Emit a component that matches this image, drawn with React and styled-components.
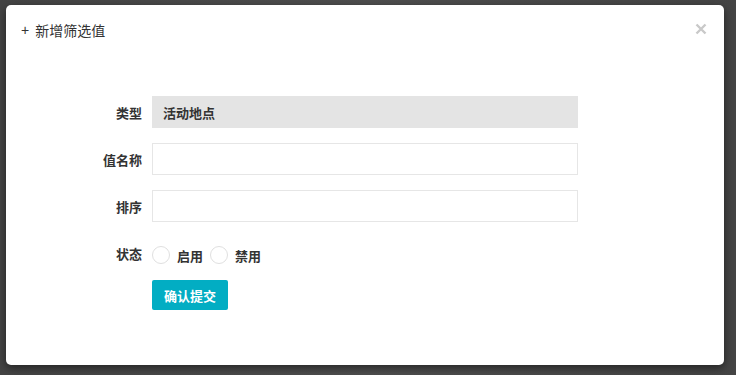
import React from "react";
import styled, { createGlobalStyle } from "styled-components";

const Global = createGlobalStyle`
  html, body { margin: 0; padding: 0; }
  body {
    width: 736px; height: 375px; overflow: hidden;
    background: #4b4b4b;
    font-family: "Noto Sans CJK SC", "Noto Sans", "Liberation Sans", sans-serif;
    color: #333;
  }
`;

const Backdrop = styled.div`
  width: 736px;
  height: 375px;
  padding: 5px 0 0 6px;
  box-sizing: border-box;
  background: linear-gradient(90deg, #444 0%, #4e4e4e 50%, #444 100%);
`;

const Modal = styled.div`
  position: relative;
  width: 718px;
  height: 360px;
  background: #fff;
  border-radius: 5px;
  box-shadow: 0 3px 9px rgba(0, 0, 0, 0.5);
  display: flex;
  flex-direction: column;
`;

const Header = styled.div`
  display: flex;
  align-items: center;
  padding: 15px 15px 0 15px;
  height: 20px;
  font-size: 14px;
  line-height: 20px;
  color: #333;
`;

const Plus = styled.span`
  margin-right: 6px;
  font-family: "Liberation Sans", sans-serif;
  font-size: 14px;
`;

const Close = styled.button`
  position: absolute;
  top: 18px;
  right: 17px;
  width: 12px;
  height: 12px;
  padding: 0;
  border: 0;
  background: transparent;
  display: flex;
`;

const Form = styled.div`
  margin-top: 56px;
  padding-left: 56px;
  display: flex;
  flex-direction: column;
  gap: 15px;
`;

const Row = styled.div`
  display: flex;
  align-items: center;
  gap: 10px;
  height: 32px;
`;

const Label = styled.div`
  width: 80px;
  text-align: right;
  font-size: 13px;
  font-weight: 700;
  color: #333;
`;

const Field = styled.div`
  width: 426px;
  height: 32px;
  box-sizing: border-box;
  display: flex;
  align-items: center;
  padding: 0 10px;
  font-size: 13px;
  font-weight: 700;
  color: #333;
  background: ${(p) => (p.$disabled ? "#e4e4e4" : "#fff")};
  border: 1px solid ${(p) => (p.$disabled ? "#e4e4e4" : "#e6e6e6")};
`;

const RadioGroup = styled.div`
  display: flex;
  align-items: center;
  padding-top: 4px;
`;

const RadioOption = styled.label`
  display: flex;
  align-items: center;
  gap: 7px;
  margin-right: 7px;
  font-size: 13px;
  font-weight: 700;
  color: #333;
`;

const Circle = styled.span`
  width: 18px;
  height: 18px;
  box-sizing: border-box;
  border-radius: 50%;
  border: 1px solid #e0e0e0;
  background: #fff;
`;

const ButtonRow = styled.div`
  display: flex;
  padding-left: 90px;
  margin-top: -4px;
`;

const Submit = styled.button`
  width: 76px;
  height: 30px;
  border: 0;
  border-radius: 2px;
  background: #02adc3;
  color: #fff;
  font-family: inherit;
  font-size: 13px;
  font-weight: 700;
  padding: 0;
`;

export default function App() {
  return (
    <>
      <Global />
      <Backdrop>
        <Modal>
          <Header>
            <Plus>+</Plus>
            新增筛选值
          </Header>
          <Close aria-label="close">
            <svg width="12" height="12" viewBox="0 0 12 12">
              <path d="M1.5 1.5 L10.5 10.5 M10.5 1.5 L1.5 10.5" stroke="#c9c9c9" strokeWidth="2.4" strokeLinecap="butt" />
            </svg>
          </Close>
          <Form>
            <Row>
              <Label>类型</Label>
              <Field $disabled>活动地点</Field>
            </Row>
            <Row>
              <Label>值名称</Label>
              <Field />
            </Row>
            <Row>
              <Label>排序</Label>
              <Field />
            </Row>
            <Row>
              <Label>状态</Label>
              <RadioGroup>
                <RadioOption>
                  <Circle />
                  启用
                </RadioOption>
                <RadioOption>
                  <Circle />
                  禁用
                </RadioOption>
              </RadioGroup>
            </Row>
            <ButtonRow>
              <Submit>确认提交</Submit>
            </ButtonRow>
          </Form>
        </Modal>
      </Backdrop>
    </>
  );
}
